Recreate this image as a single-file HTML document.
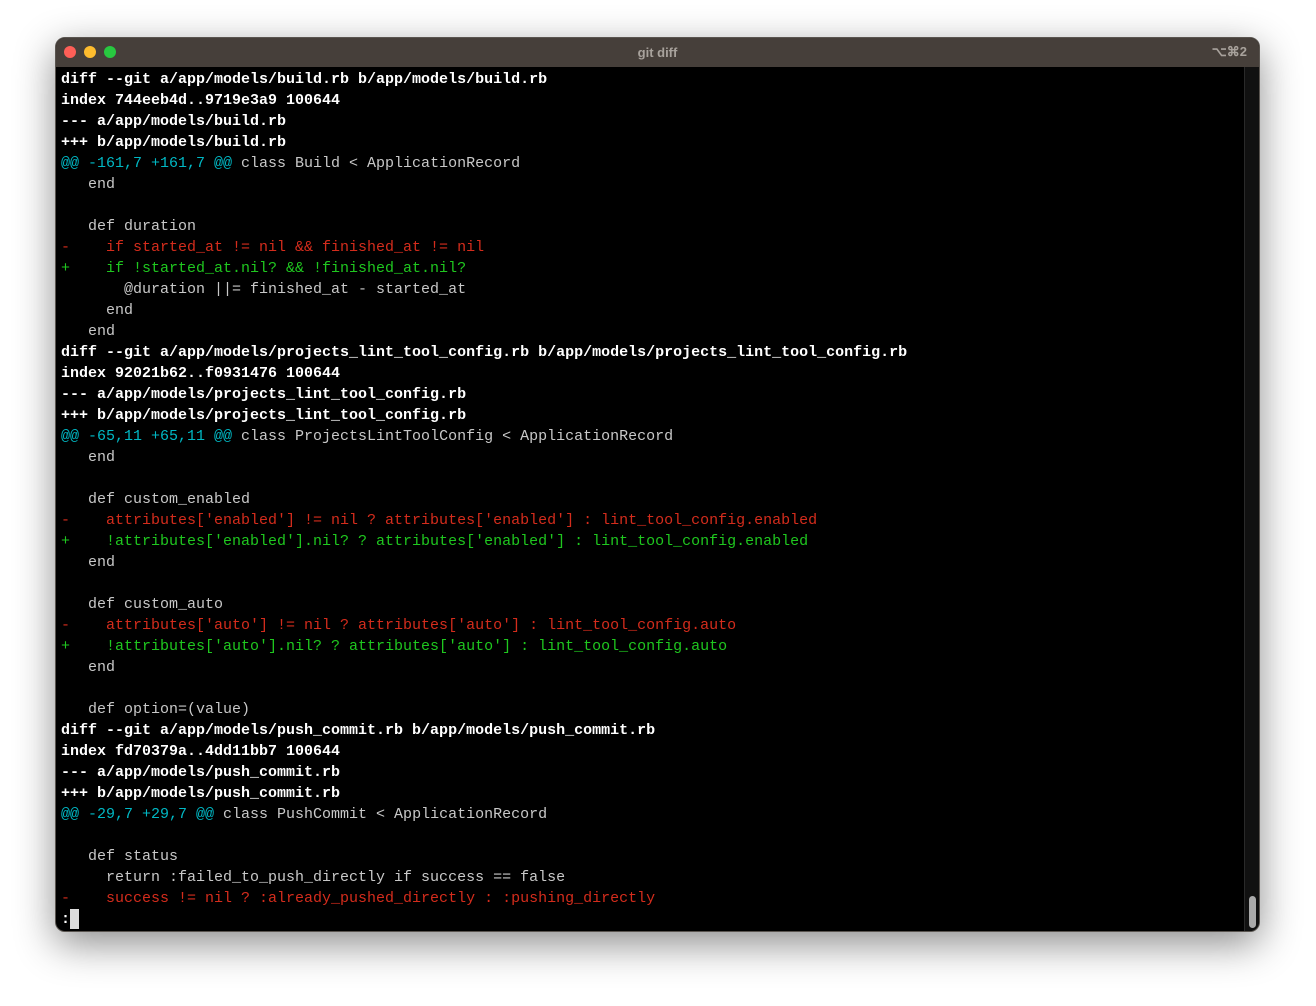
<!DOCTYPE html>
<html><head><meta charset="utf-8"><style>
body{margin:0;width:1316px;height:1006px;background:#fff;position:relative;overflow:hidden}
.win{position:absolute;left:55px;top:37px;width:1205px;height:895px;background:#000;border-radius:10px;overflow:hidden;box-shadow:0 12px 40px rgba(0,0,0,.45);border:1px solid #5a5550;box-sizing:border-box}
.tb{height:29px;background:#463f3a;position:relative;font-family:"Liberation Sans",sans-serif;font-weight:bold;font-size:13px;color:#a8a29c}
.tb .t{position:absolute;left:0;right:0;top:7px;text-align:center}
.tb .k{position:absolute;right:12px;top:6px}
.d{position:absolute;top:8px;width:12px;height:12px;border-radius:50%}
pre{margin:0;position:absolute;left:5px;top:31px;font-family:"Liberation Mono",monospace;font-size:15px;line-height:21px;color:#c8c8c8}
.h{color:#fff;font-weight:bold}.c{color:#00b8c4}.r{color:#d42c1c}.g{color:#1fc71f}
.sb{position:absolute;right:0;top:29px;width:14px;bottom:0;background:#111;border-left:1px solid #2a2a2a}
.th{position:absolute;right:3px;bottom:3px;width:7px;height:32px;border-radius:4px;background:#aaa}
.cur{display:inline-block;width:9px;height:20px;background:#ddd;vertical-align:top}
</style></head><body>
<div class="win">
<div class="tb"><div class="d" style="left:8px;background:#fe5f57"></div><div class="d" style="left:28px;background:#febc2e"></div><div class="d" style="left:48px;background:#28c840"></div><div class="t">git diff</div><div class="k">⌥⌘2</div></div>
<pre><span class="h">diff --git a/app/models/build.rb b/app/models/build.rb
index 744eeb4d..9719e3a9 100644
--- a/app/models/build.rb
+++ b/app/models/build.rb</span>
<span class="c">@@ -161,7 +161,7 @@</span> class Build &lt; ApplicationRecord
   end

   def duration
<span class="r">-    if started_at != nil &amp;&amp; finished_at != nil</span>
<span class="g">+    if !started_at.nil? &amp;&amp; !finished_at.nil?</span>
       @duration ||= finished_at - started_at
     end
   end
<span class="h">diff --git a/app/models/projects_lint_tool_config.rb b/app/models/projects_lint_tool_config.rb
index 92021b62..f0931476 100644
--- a/app/models/projects_lint_tool_config.rb
+++ b/app/models/projects_lint_tool_config.rb</span>
<span class="c">@@ -65,11 +65,11 @@</span> class ProjectsLintToolConfig &lt; ApplicationRecord
   end

   def custom_enabled
<span class="r">-    attributes['enabled'] != nil ? attributes['enabled'] : lint_tool_config.enabled</span>
<span class="g">+    !attributes['enabled'].nil? ? attributes['enabled'] : lint_tool_config.enabled</span>
   end

   def custom_auto
<span class="r">-    attributes['auto'] != nil ? attributes['auto'] : lint_tool_config.auto</span>
<span class="g">+    !attributes['auto'].nil? ? attributes['auto'] : lint_tool_config.auto</span>
   end

   def option=(value)
<span class="h">diff --git a/app/models/push_commit.rb b/app/models/push_commit.rb
index fd70379a..4dd11bb7 100644
--- a/app/models/push_commit.rb
+++ b/app/models/push_commit.rb</span>
<span class="c">@@ -29,7 +29,7 @@</span> class PushCommit &lt; ApplicationRecord

   def status
     return :failed_to_push_directly if success == false
<span class="r">-    success != nil ? :already_pushed_directly : :pushing_directly</span>
<span class="h">:</span><span class="cur"></span></pre>
<div class="sb"><div class="th"></div></div>
</div>
</body></html>
